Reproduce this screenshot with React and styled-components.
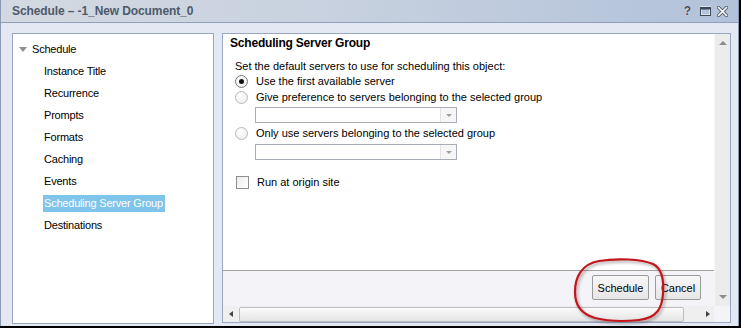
import React from "react";
import styled, { createGlobalStyle } from "styled-components";

// colours taken from the dialog
const frameBg = "#e3e8f2";
const panelLine = "#98a6bf";
const uiFont = `"Liberation Sans", Arial, sans-serif`;

const GlobalStyle = createGlobalStyle`
  html, body { margin: 0; padding: 0; background: #000; }
  body { width: 741px; height: 328px; overflow: hidden; font-family: ${uiFont}; }
`;

const Window = styled.div`
  position: relative;
  width: 737px;
  height: 326px;
  border-left: 1px solid #8a9ab3;
  border-right: 1px solid #8a9ab3;
  background: ${frameBg};
  display: flex;
  flex-direction: column;
`;

const TitleBar = styled.div`
  height: 22px;
  border-bottom: 1px solid #8d9fbb;
  background: linear-gradient(to right, #d3d9e2 0%, #c7d1df 45%, #b2c2da 100%);
  display: flex;
  align-items: center;
  padding: 0 10px 0 11px;
`;

const Title = styled.div`
  flex: 1;
  font-size: 12px;
  font-weight: bold;
  letter-spacing: -0.1px;
  color: #4d5a6b;
`;

const TitleButtons = styled.div`
  display: flex;
  align-items: center;
  gap: 6px;
  color: #3f4958;
`;

const Help = styled.span`
  font-size: 12px;
  font-weight: bold;
  color: #3f4958;
  text-shadow: 0 0 1px #fff;
  margin-right: 3px;
`;

const Body = styled.div`
  flex: 1;
  display: flex;
  align-items: flex-start;
  gap: 8px;
  padding: 10px 0 0 11px;
`;

const TreePanel = styled.div`
  width: 202px;
  height: 291px;
  box-sizing: border-box;
  border: 1px solid ${panelLine};
  background: #fff;
  padding-top: 4px;
  font-size: 11px;
  letter-spacing: -0.2px;
  color: #000;
`;

const TreeRoot = styled.div`
  height: 22px;
  display: flex;
  align-items: center;
  padding-left: 6px;
`;

const Caret = styled.span`
  width: 0;
  height: 0;
  border-left: 4.5px solid transparent;
  border-right: 4.5px solid transparent;
  border-top: 5px solid #8e8e8e;
  margin-right: 5px;
`;

const TreeItem = styled.div`
  height: 22px;
  display: flex;
  align-items: center;
  padding-left: 30px;
`;

const TreeLabel = styled.span`
  line-height: 17px;
  padding: 0 2px 0 1px;
  background: ${(p) => (p.$selected ? "#7fc4ea" : "transparent")};
  color: ${(p) => (p.$selected ? "#fff" : "#000")};
`;

const MainPanel = styled.div`
  width: 507px;
  height: 288px;
  border: 1px solid ${panelLine};
  display: grid;
  grid-template-columns: 1fr 16px;
  grid-template-rows: 1fr 16px;
  background: #f4f4f8;
`;

const Page = styled.div`
  display: flex;
  flex-direction: column;
  background: #fff;
`;

const Content = styled.div`
  height: 236px;
  padding: 1px 0 0 7px;
  box-sizing: border-box;
  font-size: 11px;
  color: #000;
`;

const Heading = styled.div`
  font-size: 12px;
  font-weight: bold;
  letter-spacing: -0.2px;
  line-height: 16px;
`;

const Options = styled.div`
  padding-left: 5px;
  margin-top: 8px;
`;

const Lead = styled.div`
  line-height: 14px;
`;

const OptionRow = styled.div`
  display: flex;
  align-items: center;
  height: 16px;
  gap: 8px;
  margin-top: ${(p) => p.$gap || 0}px;
`;

const Radio = styled.span`
  width: 11px;
  height: 11px;
  border-radius: 50%;
  border: 1px solid ${(p) => (p.$on ? "#7a7a7a" : "#b9b9b9")};
  background: radial-gradient(circle at 40% 35%, #ffffff 0%, #e9e9e9 100%);
  display: flex;
  align-items: center;
  justify-content: center;
  &::after {
    content: "";
    width: 5px;
    height: 5px;
    border-radius: 50%;
    background: ${(p) => (p.$on ? "#111" : "transparent")};
  }
`;

const Check = styled.span`
  width: 11px;
  height: 11px;
  margin-left: 1px;
  border: 1px solid #8f8f8f;
  background: linear-gradient(135deg, #ededed, #ffffff);
`;

const Combo = styled.div`
  width: 200px;
  height: 14px;
  margin-left: 20px;
  margin-top: ${(p) => p.$gap || 0}px;
  border: 1px solid #a9aeb6;
  background: #fff;
  display: flex;
  justify-content: flex-end;
`;

const ComboButton = styled.span`
  width: 15px;
  border-left: 1px solid #e2e2e2;
  background: #f6f6f6;
  display: flex;
  align-items: center;
  justify-content: center;
  &::after {
    content: "";
    border-left: 3px solid transparent;
    border-right: 3px solid transparent;
    border-top: 3px solid #a0a0a0;
  }
`;

const ButtonBar = styled.div`
  flex: 1;
  border-top: 1px solid #a3a3a3;
  background: #f4f4f8;
  display: flex;
  justify-content: flex-end;
  align-items: flex-start;
  gap: 6px;
  padding: 4px 13px 0 0;
`;

const Button = styled.button`
  height: 25px;
  width: ${(p) => p.$w}px;
  padding: 0;
  border: 1px solid #9a9a9a;
  border-radius: 2px;
  background: linear-gradient(#f7f7f7, #e6e6e6);
  font-family: ${uiFont};
  font-size: 11px;
  color: #000;
`;

const VScroll = styled.div`
  grid-row: 1;
  grid-column: 2;
  background: #ececec;
  border-left: 1px solid #f6f6f6;
  display: flex;
  flex-direction: column;
  justify-content: space-between;
  align-items: center;
  padding: 7px 0 7px;
`;

const HScroll = styled.div`
  grid-row: 2;
  grid-column: 1;
  background: #efefef;
  display: flex;
  align-items: center;
  padding: 0 4px 0 6px;
  gap: 6px;
`;

const Thumb = styled.div`
  flex: 1;
  height: 13px;
  margin-right: 16px;
  border: 1px solid #bdbdbd;
  border-radius: 2px;
  background: linear-gradient(#fbfbfb, #e4e4e4);
`;

const Arrow = styled.span`
  width: 0;
  height: 0;
  ${(p) =>
    p.$dir === "up" &&
    `border-left:4px solid transparent;border-right:4px solid transparent;border-bottom:4px solid #8c8c8c;`}
  ${(p) =>
    p.$dir === "down" &&
    `border-left:4px solid transparent;border-right:4px solid transparent;border-top:4px solid #8c8c8c;`}
  ${(p) =>
    p.$dir === "left" &&
    `border-top:3.5px solid transparent;border-bottom:3.5px solid transparent;border-right:4px solid #444;`}
  ${(p) =>
    p.$dir === "right" &&
    `border-top:3.5px solid transparent;border-bottom:3.5px solid transparent;border-left:4px solid #444;`}
`;

const Corner = styled.div`
  grid-row: 2;
  grid-column: 2;
  background: #f4f4f8;
`;

// hand-drawn red annotation circle over the Schedule button
const Annotation = styled.svg`
  position: absolute;
  left: 568px;
  top: 256px;
  pointer-events: none;
`;

const navItems = [
  "Instance Title",
  "Recurrence",
  "Prompts",
  "Formats",
  "Caching",
  "Events",
  "Scheduling Server Group",
  "Destinations",
];

export default function App() {
  return (
    <>
      <GlobalStyle />
      <Window>
        <TitleBar>
          <Title>Schedule – -1_New Document_0</Title>
          <TitleButtons>
            <Help>?</Help>
            <svg width="11" height="10" viewBox="0 0 11 10">
              <rect x="0.5" y="1.5" width="10" height="8" fill="none" stroke="#fff" strokeWidth="2" />
              <rect x="0.5" y="1.5" width="10" height="8" fill="none" stroke="#3f4958" strokeWidth="1" />
              <rect x="0.5" y="1.5" width="10" height="2" fill="#3f4958" />
            </svg>
            <svg width="11" height="11" viewBox="0 0 11 11">
              <path d="M1.5 1.5 L9.5 9.5 M9.5 1.5 L1.5 9.5" stroke="#5b6677" strokeWidth="3.4" strokeLinecap="round" />
              <path d="M1.5 1.5 L9.5 9.5 M9.5 1.5 L1.5 9.5" stroke="#fff" strokeWidth="1.6" strokeLinecap="round" />
            </svg>
          </TitleButtons>
        </TitleBar>
        <Body>
          <TreePanel>
            <TreeRoot>
              <Caret />
              <span>Schedule</span>
            </TreeRoot>
            {navItems.map((item) => (
              <TreeItem key={item}>
                <TreeLabel $selected={item === "Scheduling Server Group"}>{item}</TreeLabel>
              </TreeItem>
            ))}
          </TreePanel>
          <MainPanel>
            <Page>
              <Content>
                <Heading>Scheduling Server Group</Heading>
                <Options>
                  <Lead>Set the default servers to use for scheduling this object:</Lead>
                  <OptionRow>
                    <Radio $on />
                    <span>Use the first available server</span>
                  </OptionRow>
                  <OptionRow>
                    <Radio />
                    <span>Give preference to servers belonging to the selected group</span>
                  </OptionRow>
                  <Combo $gap={2}>
                    <ComboButton />
                  </Combo>
                  <OptionRow $gap={2}>
                    <Radio />
                    <span>Only use servers belonging to the selected group</span>
                  </OptionRow>
                  <Combo $gap={3}>
                    <ComboButton />
                  </Combo>
                  <OptionRow $gap={14}>
                    <Check />
                    <span>Run at origin site</span>
                  </OptionRow>
                </Options>
              </Content>
              <ButtonBar>
                <Button $w={57}>Schedule</Button>
                <Button $w={46}>Cancel</Button>
              </ButtonBar>
            </Page>
            <VScroll>
              <Arrow $dir="up" />
              <Arrow $dir="down" />
            </VScroll>
            <HScroll>
              <Arrow $dir="left" />
              <Thumb />
              <Arrow $dir="right" />
            </HScroll>
            <Corner />
          </MainPanel>
        </Body>
        <Annotation width="104" height="72" viewBox="0 0 104 72">
          <defs>
            <filter id="ringShadow" x="-20%" y="-20%" width="140%" height="140%">
              <feDropShadow dx="1.5" dy="2" stdDeviation="1.5" floodColor="#000" floodOpacity="0.35" />
            </filter>
          </defs>
          <path
            d="M30 5 C48 2 72 3 84 8 C94 13 95 26 94 38 C93 52 88 62 70 64 C56 65.5 38 65 26 62 C12 58 6 48 6 36 C6 22 12 8 30 5 Z"
            fill="none"
            stroke="#c3161c"
            strokeWidth="2.2"
            filter="url(#ringShadow)"
          />
        </Annotation>
      </Window>
    </>
  );
}
